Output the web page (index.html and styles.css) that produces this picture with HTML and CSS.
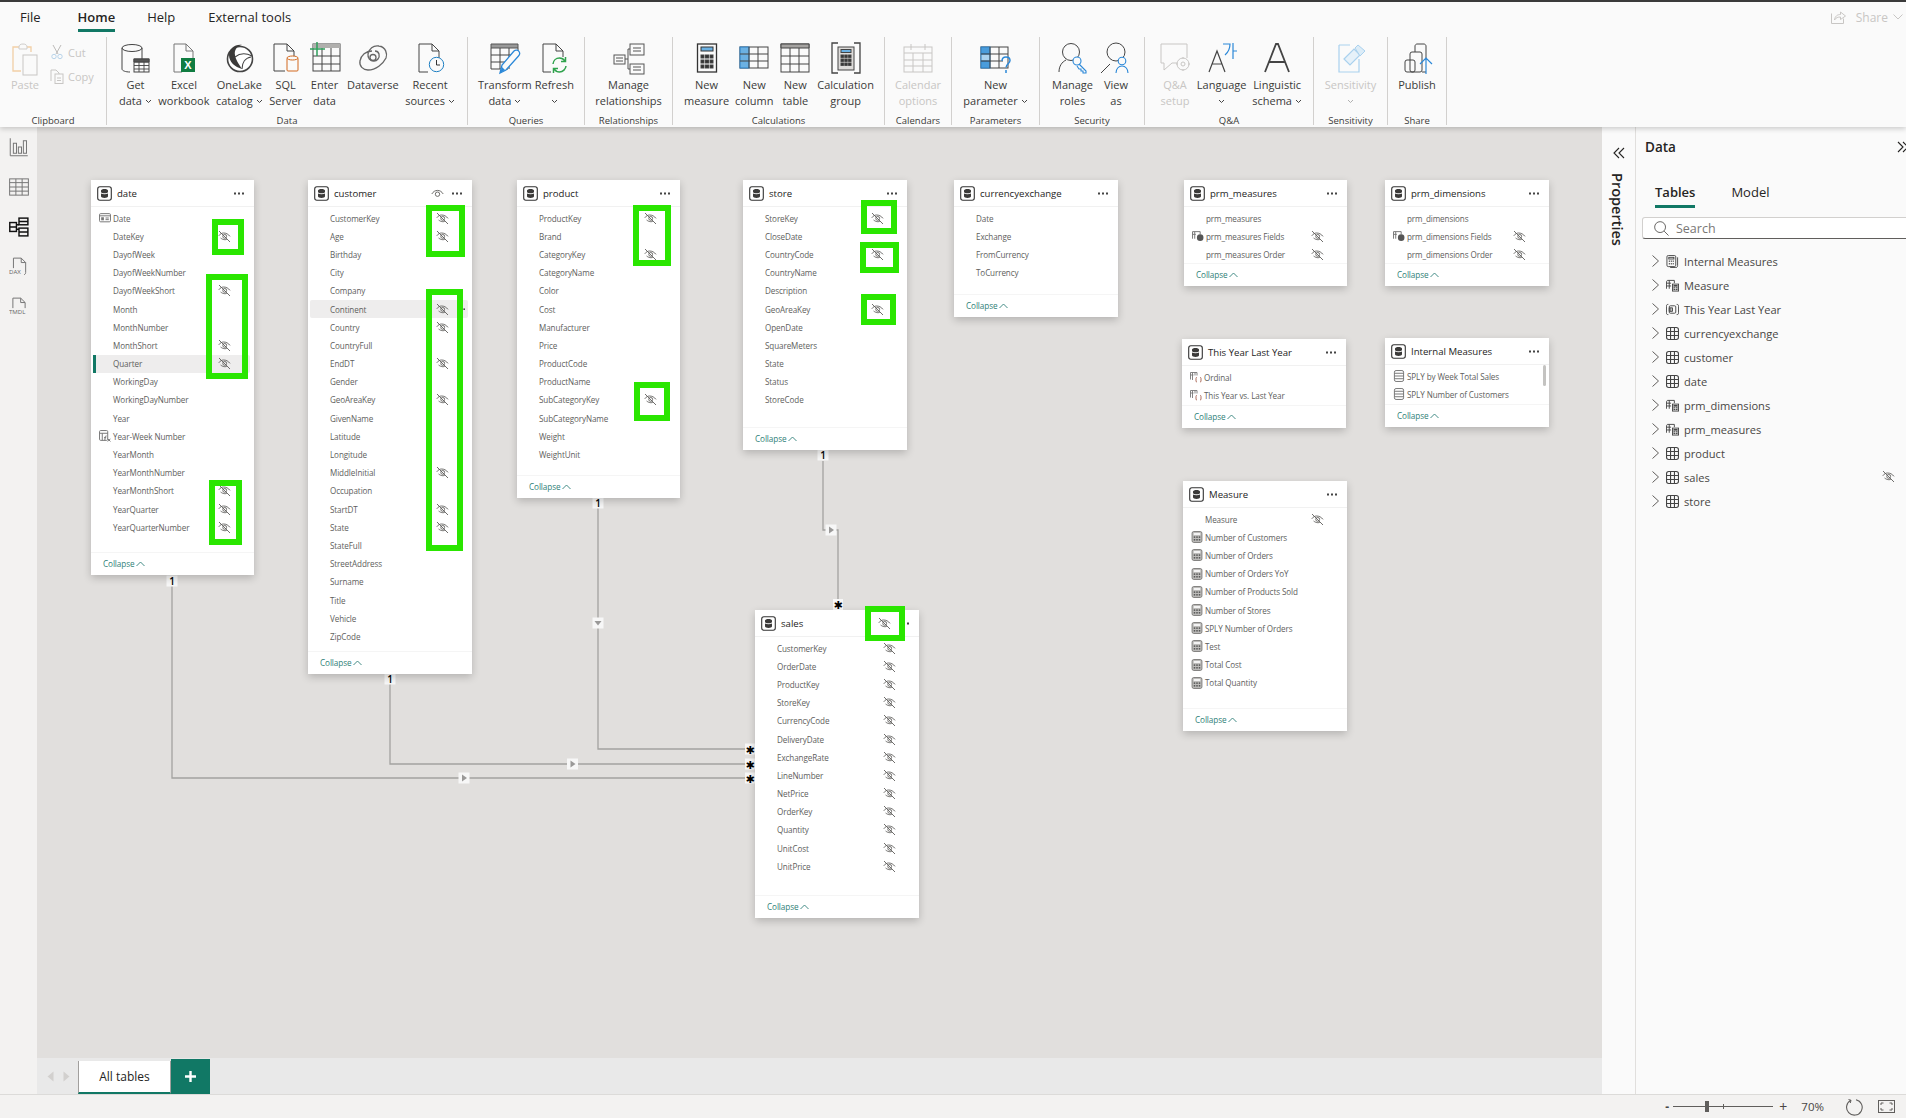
FILE: index.html
```html
<!DOCTYPE html>
<html lang="en">
<head>
<meta charset="utf-8">
<title>Model view</title>
<link rel="stylesheet" href="styles.css">
</head>
<body>
<svg class="sprite" aria-hidden="true">
  <symbol id="eye" viewBox="0 0 13 13"><g fill="none" stroke="#5f5d5b" stroke-width="0.9"><path d="M1 1l11 11"/><path d="M.8 5.8C2 3.9 3.9 3 5.6 3c2.7 0 4.8 1.3 6.4 3.4"/><path d="M2.6 8c1.4 1.1 2.8 1.7 4.2 1.7.7 0 1.4-.1 2-.4"/><circle cx="6.7" cy="6.4" r="1.9"/></g></symbol>
  <symbol id="eyeopen" viewBox="0 0 13 13"><g fill="none" stroke="#5f5d5b" stroke-width="0.9"><path d="M.8 7C2.2 4.6 4.2 3.4 6.5 3.4s4.3 1.2 5.7 3.6"/><circle cx="6.5" cy="7.2" r="2.2"/></g></symbol>
  <symbol id="tbl" viewBox="0 0 15 15"><rect x=".7" y=".7" width="13.6" height="13.6" rx="2.2" fill="#fff" stroke="#333" stroke-width="1.1"/><path d="M4 4.6c0-1 1.6-1.6 3.5-1.6s3.5.6 3.5 1.6v1.2c0 1-1.6 1.5-3.5 1.5S4 6.800 4 5.800zM4 7.400c1.800 1.100 5.200 1.100 7 0v2.900c0 1-1.600 1.700-3.500 1.700S4 11.300 4 10.300z" fill="#3b3a39"/></symbol>
  <symbol id="more" viewBox="0 0 10 3"><g fill="#444"><rect x="0" y="0.5" width="2" height="2"/><rect x="4" y="0.5" width="2" height="2"/><rect x="8" y="0.5" width="2" height="2"/></g></symbol>
  <symbol id="caret" viewBox="0 0 9 6"><path d="M.5 5L4.500 1l4 4" fill="none" stroke="#2f7f78" stroke-width=".9"/></symbol>
  <symbol id="chev" viewBox="0 0 7 5"><path d="M1 1l2.500 2.500L6 1" fill="none" stroke="#444" stroke-width="1"/></symbol>
  <symbol id="r-cal" viewBox="0 0 11 9"><g fill="none" stroke="#777" stroke-width=".9"><rect x=".5" y=".5" width="10" height="7.500" rx="1"/><path d="M.5 2.500h10M6 4.500h3M6 6h3"/></g><rect x="2" y="3.800" width="2.500" height="2.800" fill="#777"/></symbol>
  <symbol id="r-fx" viewBox="0 0 11 11"><g fill="none" stroke="#777" stroke-width=".9"><rect x=".5" y=".5" width="7.500" height="9" rx="1"/><path d="M.5 3h7.500M3 3v6.500"/><path d="M7 5.500c-1-.3-1.200.3-1.300 1.200L5.300 9.500M4.600 7h2"/><path d="M8 8l2.500 2.500M10.500 8L8 10.500"/></g></symbol>
  <symbol id="r-fp" viewBox="0 0 11 11"><g fill="none" stroke="#777" stroke-width=".9"><path d="M.5 8V1.500h7V4M2.500 1.500V8M.5 4h3"/></g><circle cx="7.500" cy="7" r="3" fill="#555"/></symbol>
  <symbol id="r-par" viewBox="0 0 12 11"><g fill="none" stroke="#777" stroke-width=".9"><path d="M.5 8V1h6.500v3M2.500 1v7.500M.5 3.500h3M5 1v3"/><path d="M7 6c-1 0-1 .4-1 1v2.500c0 .6.200 1 1 1M10 6c1 0 1 .4 1 1v2.500c0 .6-.2 1-1 1" stroke="#a6614f"/></g></symbol>
  <symbol id="r-list" viewBox="0 0 10 11"><g fill="none" stroke="#777" stroke-width=".9"><rect x=".8" y=".5" width="8.400" height="10" rx="1.500"/><path d="M.8 3h8.400M.8 5.500h8.400M.8 8h8.400"/></g></symbol>
  <symbol id="r-calc" viewBox="0 0 10 11"><rect x=".5" y=".5" width="9" height="10" rx="1.500" fill="#bdbcba" stroke="#807e7c" stroke-width=".9"/><rect x="2" y="2" width="6" height="1.500" fill="#fff"/><g fill="#444"><rect x="2" y="5" width="1.400" height="1.200"/><rect x="4.300" y="5" width="1.400" height="1.200"/><rect x="6.600" y="5" width="1.400" height="1.200"/><rect x="2" y="7.500" width="1.400" height="1.200"/><rect x="4.300" y="7.500" width="1.400" height="1.200"/><rect x="6.600" y="7.500" width="1.400" height="1.200"/></g></symbol>
  <symbol id="d-grid" viewBox="0 0 12 12"><g fill="none" stroke="#444" stroke-width="1"><rect x=".5" y=".5" width="11" height="11" rx="2"/><path d="M4.200.5v11M7.800.5v11M.5 4.200h11M.5 7.800h11"/></g></symbol>
  <symbol id="d-calc" viewBox="0 0 14 13"><g fill="none" stroke="#444" stroke-width="1"><path d="M.5 10V2.500l1-1.500h7.500v3M3.500 1v9M.5 4h5M.5 7h5"/></g><rect x="7" y="5" width="6.500" height="7.500" fill="#fff" stroke="#444"/><rect x="8" y="6" width="4.500" height="5.500" fill="#444"/><path d="M8 8h4.500M8 9.800h4.500M10.200 8v3.500" stroke="#fff" stroke-width=".6"/></symbol>
  <symbol id="d-imeas" viewBox="0 0 13 14"><g fill="none" stroke="#444" stroke-width="1"><rect x=".5" y=".5" width="9.500" height="12" rx="1.500"/><path d="M12 2.500v9c0 1.500-1 2-2 2H4"/><rect x="2.500" y="2.500" width="5.500" height="1.800"/></g><g fill="#444"><rect x="2.500" y="6" width="1.300" height="1.300"/><rect x="4.600" y="6" width="1.300" height="1.300"/><rect x="6.700" y="6" width="1.300" height="1.300"/><rect x="2.500" y="8.800" width="1.300" height="1.300"/><rect x="4.600" y="8.800" width="1.300" height="1.300"/><rect x="6.700" y="8.800" width="1.300" height="1.300"/></g></symbol>
  <symbol id="d-par" viewBox="0 0 14 12"><g fill="none" stroke="#444" stroke-width="1"><path d="M2.500.5C1 .5.500 1 .500 2.500v7c0 1.500.5 2 2 2M11.500.5c1.500 0 2 .5 2 2v7c0 1.500-.5 2-2 2"/><rect x="3.500" y="2" width="7" height="8" rx="1.200"/><path d="M3.500 4.200h3.500V8H3.500zM5.200 4.200V8"/></g></symbol>
</svg>

<div class="app">
  <header class="ribbon">
    <nav class="menu">
      <span class="menu-item m-file">File</span>
      <span class="menu-item m-home">Home</span>
      <span class="menu-item m-help">Help</span>
      <span class="menu-item m-ext">External tools</span>
      <span class="share">
        <svg class="share-ic" viewBox="0 0 15 14"><g fill="none" stroke="#c8c6c4"><path d="M.5 3.500v10h12v-5"/><path d="M3.500 10c.5-4 3-5.500 6-5.500V2l5 4-5 3.500V7c-2.500 0-4.500.5-6 3z"/></g></svg>
        <span>Share</span>
        <svg class="share-ch" viewBox="0 0 10 6"><path d="M.5.500l4.500 4.500 4.500-4.500" fill="none" stroke="#c8c6c4"/></svg>
      </span>
    </nav>
    <div class="groups">
      <section class="group g-clip">
        <div class="items clip-items">
          <div class="btn off">
            <svg class="ri" viewBox="0 0 32 32"><path d="M10 5H4v24h8" stroke="#f2cfa6" stroke-width="1.300"/><path d="M18 5h4v5" stroke="#f2cfa6" stroke-width="1.300"/><path d="M10 5c0-2 1.500-3 4-3s4 1 4 3v2h-8z" stroke="#cfcdcb"/><rect x="14" y="13" width="14" height="20" stroke="#c8c6c4" fill="#fafafa"/></svg>
            <span class="lbl">Paste</span>
          </div>
          <div class="mini">
            <div class="mini-row off">
              <svg class="mi" viewBox="0 0 14 16"><path d="M3 1l5 9M11 1L6 10" stroke="#bdbbb9"/><circle cx="4" cy="12.500" r="2.200" stroke="#b9d4ea"/><circle cx="10" cy="12.500" r="2.200" stroke="#b9d4ea"/></svg>
              <span>Cut</span>
            </div>
            <div class="mini-row off">
              <svg class="mi" viewBox="0 0 14 16"><path d="M1 13V2h5l3 3v3" stroke="#c8c6c4"/><rect x="5" y="6" width="8" height="9.500" fill="#fafafa" stroke="#c8c6c4"/><path d="M7 10h4M7 12.500h4" stroke="#c8c6c4"/></svg>
              <span>Copy</span>
            </div>
          </div>
        </div>
        <div class="glabel">Clipboard</div>
      </section>

      <section class="group g-data">
        <div class="items">
          <div class="btn">
            <svg class="ri" viewBox="0 0 32 32"><ellipse cx="13" cy="6" rx="10" ry="3.500"/><path d="M3 6v21c0 1.700 3.500 3 8 3M23 6v11"/><rect x="15" y="17" width="15" height="13" fill="#fafafa"/><path d="M15 20h15M15 23.500h15M15 27h15M20 20v10M25 20v10" stroke-width=".9"/><path d="M15 17h15v3H15z" fill="#555"/></svg>
            <span class="lbl">Get<br>data<svg class="ch"><use href="#chev"/></svg></span>
          </div>
          <div class="btn">
            <svg class="ri" viewBox="0 0 32 32"><path d="M6 30V2h12l7 7v8M18 2v7h7M6 30h8" stroke="#777"/><rect x="13" y="16" width="14" height="14" fill="#107c41" stroke="none"/><text x="20" y="27" class="xl">X</text></svg>
            <span class="lbl">Excel<br>workbook</span>
          </div>
          <div class="btn">
            <svg class="ri" viewBox="0 0 32 32"><circle cx="17" cy="17" r="12.500" stroke-width="1.600" fill="#fff"/><path d="M6 13C6 7 12 2 19 3c-5 1-8 5-7 10 .5 4 3 8 7 14C12 25 6 20 6 13z" fill="#3b3a39" stroke="none"/><path d="M12 15c5-4 11-4 17-1M19 27c0-6 3-11 9-12" stroke-width="1.100"/></svg>
            <span class="lbl">OneLake<br>catalog<svg class="ch"><use href="#chev"/></svg></span>
          </div>
          <div class="btn">
            <svg class="ri" viewBox="0 0 32 32"><path d="M4 29V2h13l7 7v7M17 2v7h7M4 29h11"/><rect x="17" y="16" width="11" height="13" rx="1" stroke="#d2691e" fill="#fafafa"/><ellipse cx="22.500" cy="16" rx="5.500" ry="2" stroke="#d2691e" fill="#fafafa"/></svg>
            <span class="lbl">SQL<br>Server</span>
          </div>
          <div class="btn">
            <svg class="ri ri-w" viewBox="0 0 32 32"><rect x="4" y="2" width="27" height="27" fill="#fafafa"/><path d="M4 2h27v4H4z" fill="#b0afad" stroke="none"/><path d="M4 14h27M4 22h27M13 6v23M22 6v23"/><path d="M1 7h15M8 0v14" stroke="#2e9e5b" stroke-width="1.500"/></svg>
            <span class="lbl">Enter<br>data</span>
          </div>
          <div class="btn">
            <svg class="ri" viewBox="0 0 32 32"><g stroke="#666" stroke-width="1.300"><path d="M15 9C9 9 4 13 3 19c-1 5 3 9 8 9 8 0 15-6 18-12 1.500-4 0-11-7-12-6-1-10 3-11 8-.5 4 2 7 6 7 3 0 6-3 5-7-.6-2-2-3-4-3"/><circle cx="16" cy="15.500" r="3"/></g></svg>
            <span class="lbl">Dataverse</span>
          </div>
          <div class="btn">
            <svg class="ri" viewBox="0 0 32 32"><path d="M5 30V2h13l7 7v8M18 2v7h7M5 30h9"/><circle cx="22.500" cy="22.500" r="7.200" stroke="#1e7fc2" fill="#fafafa"/><path d="M22.500 18v5h3.500" stroke="#333"/></svg>
            <span class="lbl">Recent<br>sources<svg class="ch"><use href="#chev"/></svg></span>
          </div>
        </div>
        <div class="glabel">Data</div>
      </section>

      <section class="group g-query">
        <div class="items">
          <div class="btn">
            <svg class="ri" viewBox="0 0 32 32"><path d="M2 2h27v4H2z" fill="#999" stroke="#555"/><path d="M2 6v21h17M29 6v8M2 13h27M2 20h18M11 6v21M20 6v21"/><path d="M11 31l2-8L25 9c1.500-1.500 4-1 5 .5s1 3-.5 4.500L17 28z" fill="#fafafa" stroke="#2b88d8" stroke-width="1.300"/><path d="M11 31l2-6 3 3z" fill="#2b88d8" stroke="none"/></svg>
            <span class="lbl">Transform<br>data<svg class="ch"><use href="#chev"/></svg></span>
          </div>
          <div class="btn">
            <svg class="ri" viewBox="0 0 32 32"><path d="M5 30V2h13l7 7v6M18 2v7h7M5 30h8"/><g fill="none" stroke="#2fa24c" stroke-width="1.500"><path d="M15 22c.3-3.500 3-6 6.500-6 2 0 4 1 5.500 3"/><path d="M28 24c-.3 3-3 6-6.500 6-2 0-4-1-5.500-3"/><path d="M27.500 15v4.500h-4.500M15.500 31v-4.500H20"/></g></svg>
            <span class="lbl">Refresh<br><svg class="ch ch-only"><use href="#chev"/></svg></span>
          </div>
        </div>
        <div class="glabel">Queries</div>
      </section>

      <section class="group g-rel">
        <div class="items">
          <div class="btn">
            <svg class="ri" viewBox="0 0 32 32"><rect x="1" y="13" width="11" height="9" stroke="#555"/><rect x="17" y="2" width="14" height="11" stroke="#555"/><rect x="17" y="22" width="14" height="10" stroke="#555"/><path d="M12 17h3M15 7v20M15 7h2M15 27h2M3 16h7M3 19h7M20 6h8M20 9h8M20 25h8M20 28h8" stroke="#555"/></svg>
            <span class="lbl">Manage<br>relationships</span>
          </div>
        </div>
        <div class="glabel">Relationships</div>
      </section>

      <section class="group g-calc">
        <div class="items">
          <div class="btn">
            <svg class="ri" viewBox="0 0 32 32"><rect x="6.500" y="2" width="19" height="28" stroke="#333" stroke-width="1.300"/><rect x="10" y="5" width="12" height="4" fill="#6bb1e3" stroke="#333"/><g fill="#333"><rect x="10" y="13" width="3" height="3"/><rect x="14.500" y="13" width="3" height="3"/><rect x="19" y="13" width="3" height="3"/><rect x="10" y="18" width="3" height="3"/><rect x="14.500" y="18" width="3" height="3"/><rect x="19" y="18" width="3" height="3"/><rect x="10" y="23" width="3" height="3"/><rect x="14.500" y="23" width="3" height="3"/><rect x="19" y="23" width="3" height="3"/></g></svg>
            <span class="lbl">New<br>measure</span>
          </div>
          <div class="btn">
            <svg class="ri" viewBox="0 0 32 32"><rect x="2" y="5" width="28" height="21" fill="#fafafa" stroke="#444"/><rect x="2" y="5" width="9" height="21" fill="#6bb1e3" stroke="#2b7ec2"/><path d="M2 12h28M2 19h28M11 5v21M20 5v21" stroke="#444"/></svg>
            <span class="lbl">New<br>column</span>
          </div>
          <div class="btn">
            <svg class="ri" viewBox="0 0 32 32"><rect x="2" y="2" width="28" height="28"/><path d="M2 2h28v4H2z" fill="#a5a3a1"/><path d="M2 14h28M2 22h28M11 6v24M20 6v24"/></svg>
            <span class="lbl">New<br>table</span>
          </div>
          <div class="btn">
            <svg class="ri" viewBox="0 0 32 32"><path d="M8 1H2v30h6M24 1h6v30h-6" stroke="#444" stroke-width="1.300"/><rect x="8" y="5" width="16" height="23" fill="#dedcda" stroke="#444"/><rect x="11" y="7.500" width="10" height="3" fill="#6bb1e3" stroke="#444"/><g fill="#333"><rect x="11" y="13" width="2.400" height="2.400"/><rect x="14.800" y="13" width="2.400" height="2.400"/><rect x="18.600" y="13" width="2.400" height="2.400"/><rect x="11" y="17" width="2.400" height="2.400"/><rect x="14.800" y="17" width="2.400" height="2.400"/><rect x="18.600" y="17" width="2.400" height="2.400"/><rect x="11" y="21" width="2.400" height="2.400"/><rect x="14.800" y="21" width="2.400" height="2.400"/><rect x="18.600" y="21" width="2.400" height="2.400"/></g></svg>
            <span class="lbl">Calculation<br>group</span>
          </div>
        </div>
        <div class="glabel">Calculations</div>
      </section>

      <section class="group g-cal">
        <div class="items">
          <div class="btn off">
            <svg class="ri ri-off" viewBox="0 0 32 32"><rect x="2" y="5" width="28" height="25"/><path d="M2 11h28M2 18h28M2 24h28M11 11v19M21 11v19M9 2v6M23 2v6"/></svg>
            <span class="lbl">Calendar<br>options</span>
          </div>
        </div>
        <div class="glabel">Calendars</div>
      </section>

      <section class="group g-par">
        <div class="items">
          <div class="btn">
            <svg class="ri" viewBox="0 0 32 32"><rect x="1" y="5" width="27" height="21" fill="#fafafa" stroke="#444"/><rect x="1" y="5" width="9" height="7" fill="#4a9cdb" stroke="#2b7ec2"/><rect x="1" y="19" width="9" height="7" fill="#4a9cdb" stroke="#2b7ec2"/><rect x="1" y="12" width="9" height="7" fill="#a9d1ee" stroke="#2b7ec2"/><path d="M1 12h27M1 19h22M10 5v21M19 5v21" stroke="#444"/><path d="M22 19c0-3 2-4 4-4s4 1 4 3.500c0 3-4 3.500-4 7M26 28v3" fill="none" stroke="#2b88d8" stroke-width="1.500"/></svg>
            <span class="lbl">New<br>parameter<svg class="ch"><use href="#chev"/></svg></span>
          </div>
        </div>
        <div class="glabel">Parameters</div>
      </section>

      <section class="group g-sec">
        <div class="items">
          <div class="btn">
            <svg class="ri" viewBox="0 0 32 32"><circle cx="14" cy="10" r="8.500"/><path d="M2 30c0-6 3-10 7-12"/><g stroke="#2b88d8" stroke-width="1.100"><circle cx="20" cy="19" r="4" fill="#fafafa"/><path d="M22 22l7 7v2h-3v-2h-2v-2h-2l-2-3"/></g></svg>
            <span class="lbl">Manage<br>roles</span>
          </div>
          <div class="btn">
            <svg class="ri" viewBox="0 0 32 32"><circle cx="16" cy="10" r="9"/><path d="M1 31l9-9"/><g stroke="#2b88d8" stroke-width="1.100"><circle cx="22" cy="19" r="3.800" fill="#fafafa"/><path d="M16 31c0-4 2.500-7 6-7s6 3 6 7"/></g></svg>
            <span class="lbl">View<br>as</span>
          </div>
        </div>
        <div class="glabel">Security</div>
      </section>

      <section class="group g-qa">
        <div class="items">
          <div class="btn off">
            <svg class="ri ri-off" viewBox="0 0 32 32"><path d="M2 2h26v14M2 2v19h3v7l8-7h5"/><circle cx="24" cy="22" r="6"/><circle cx="24" cy="22" r="2"/><path d="M24 15v2M24 27v2M17 22h2M29 22h2"/></svg>
            <span class="lbl">Q&amp;A<br>setup</span>
          </div>
          <div class="btn">
            <svg class="ri" viewBox="0 0 32 32"><path d="M3 30l8-21 8 21M6 22h10" stroke-width="1.200"/><path d="M17 2h7c0 4-1.500 8-5 11M27 1v16M27 9h4" stroke="#2b88d8" stroke-width="1.200"/></svg>
            <span class="lbl">Language<br><svg class="ch ch-only"><use href="#chev"/></svg></span>
          </div>
          <div class="btn">
            <svg class="ri" viewBox="0 0 32 32"><path d="M4 30L15 2h2l11 28M8.500 20h15" stroke-width="1.800"/></svg>
            <span class="lbl">Linguistic<br>schema<svg class="ch"><use href="#chev"/></svg></span>
          </div>
        </div>
        <div class="glabel">Q&amp;A</div>
      </section>

      <section class="group g-sens">
        <div class="items">
          <div class="btn off">
            <svg class="ri" viewBox="0 0 32 32"><path d="M4 3h11M4 3v27h20V17" stroke="#a9d1ee" stroke-width="1.200"/><path d="M9 17L19 7l6 6-10 10z" stroke="#a9d1ee" fill="#e6f1f9" stroke-width="1.200"/><path d="M20 6l3-3 7 6-5 5z" stroke="#a9d1ee" fill="#dcecf7"/></svg>
            <span class="lbl">Sensitivity<br><svg class="ch ch-only ch-off"><use href="#chev"/></svg></span>
          </div>
        </div>
        <div class="glabel">Sensitivity</div>
      </section>

      <section class="group g-share">
        <div class="items">
          <div class="btn">
            <svg class="ri" viewBox="0 0 32 32"><rect x="4" y="18" width="10" height="12" rx="2"/><rect x="9" y="10" width="12" height="20" rx="2" fill="none"/><path d="M14 10V4c0-1 1-2 2-2h7c1 0 2 1 2 2v12M21 30h4" /><path d="M25 17v15M19 22l6-6 6 6" stroke="#2b88d8" stroke-width="1.200"/></svg>
            <span class="lbl">Publish</span>
          </div>
        </div>
        <div class="glabel">Share</div>
      </section>
    </div>
  </header>

  <div class="workspace">
    <aside class="rail">
      <svg class="rail-ic" viewBox="0 0 16 16"><g fill="none" stroke="#777" stroke-width=".8"><path d="M1 1v14h14"/><rect x="3.500" y="5" width="2.500" height="8"/><rect x="7.500" y="8" width="2.500" height="5"/><rect x="11.500" y="3" width="2.500" height="10"/></g></svg>
      <svg class="rail-ic" viewBox="0 0 16 16"><g fill="none" stroke="#777" stroke-width=".8"><rect x=".5" y="1.500" width="15" height="13"/><path d="M.5 4.500h15M.5 8h15M.5 11.300h15M5.500 1.500v13M10.500 1.500v13"/></g></svg>
      <svg class="rail-ic" viewBox="0 0 18 18"><g fill="none" stroke="#111" stroke-width="1.300"><rect x=".7" y="5" width="6" height="8"/><rect x="9" y="1" width="8" height="6"/><rect x="9" y="10" width="8" height="7"/><path d="M.7 9h6M9 4h8M9 13.500h8M6.700 7H9M6.700 11H9"/></g></svg>
      <svg class="rail-ic" viewBox="0 0 18 18"><g fill="none" stroke="#777" stroke-width=".9"><path d="M4 10V1h7l4 4v9c0 1-.5 1.500-1.500 2M11 1v4h4"/></g><text x="0" y="15" class="rail-t">DAX</text></svg>
      <svg class="rail-ic" viewBox="0 0 18 18"><g fill="none" stroke="#777" stroke-width=".9"><path d="M3.500 10V1h7l4 4v5M10.500 1v4h4"/></g><text x="0" y="15.500" class="rail-t">TMDL</text></svg>
    </aside>

    <div class="center">
      <main class="canvas">
        <svg class="rels" viewBox="37 127 1566 931">
          <g class="lines">
            <path d="M172 586V778H746"/>
            <path d="M390 684V764H746"/>
            <path d="M598 508V749H746"/>
            <path d="M823 461V530H838V600"/>
          </g>
          <g class="badge"><rect x="166.500" y="575.500" width="11" height="11"/><text x="172" y="584.500">1</text></g>
          <g class="badge"><rect x="384.500" y="673.500" width="11" height="11"/><text x="390" y="682.500">1</text></g>
          <g class="badge"><rect x="592.500" y="497.500" width="11" height="11"/><text x="598" y="506.500">1</text></g>
          <g class="badge"><rect x="817.500" y="449.500" width="11" height="11"/><text x="823" y="458.500">1</text></g>
          <g class="badge"><rect x="458.500" y="772.500" width="11" height="11"/><path class="tri" d="M462 774.500l5 3.500-5 3.500z"/></g>
          <g class="badge"><rect x="567" y="758.500" width="11" height="11"/><path class="tri" d="M570.500 760.500l5 3.500-5 3.500z"/></g>
          <g class="badge"><rect x="592.500" y="617.500" width="11" height="11"/><path class="tri" d="M594.500 621l7 0-3.500 4.500z"/></g>
          <g class="badge"><rect x="825.500" y="524.500" width="11" height="11"/><path class="tri" d="M829 526.500l5 3.500-5 3.500z"/></g>
          <g class="badge star"><rect x="745" y="743.500" width="10" height="11"/><text x="750" y="753.500">✱</text></g>
          <g class="badge star"><rect x="745" y="758.500" width="10" height="11"/><text x="750" y="768.500">✱</text></g>
          <g class="badge star"><rect x="745" y="772.500" width="10" height="11"/><text x="750" y="782.500">✱</text></g>
          <g class="badge star"><rect x="833" y="599" width="10" height="11"/><text x="838" y="609">✱</text></g>
        </svg>

        <article class="card t-date">
          <div class="head"><svg class="hic"><use href="#tbl"/></svg><span class="title">date</span><svg class="dots"><use href="#more"/></svg></div>
          <div class="body">
            <div class="row"><svg class="ric"><use href="#r-cal"/></svg><span class="name">Date</span></div>
            <div class="row"><span class="name">DateKey</span><svg class="eye"><use href="#eye"/></svg></div>
            <div class="row"><span class="name">DayofWeek</span></div>
            <div class="row"><span class="name">DayofWeekNumber</span></div>
            <div class="row"><span class="name">DayofWeekShort</span><svg class="eye"><use href="#eye"/></svg></div>
            <div class="row"><span class="name">Month</span></div>
            <div class="row"><span class="name">MonthNumber</span></div>
            <div class="row"><span class="name">MonthShort</span><svg class="eye"><use href="#eye"/></svg></div>
            <div class="row hl sel"><span class="name">Quarter</span><svg class="eye"><use href="#eye"/></svg></div>
            <div class="row"><span class="name">WorkingDay</span></div>
            <div class="row"><span class="name">WorkingDayNumber</span></div>
            <div class="row"><span class="name">Year</span></div>
            <div class="row"><svg class="ric"><use href="#r-fx"/></svg><span class="name">Year-Week Number</span></div>
            <div class="row"><span class="name">YearMonth</span></div>
            <div class="row"><span class="name">YearMonthNumber</span></div>
            <div class="row"><span class="name">YearMonthShort</span><svg class="eye"><use href="#eye"/></svg></div>
            <div class="row"><span class="name">YearQuarter</span><svg class="eye"><use href="#eye"/></svg></div>
            <div class="row"><span class="name">YearQuarterNumber</span><svg class="eye"><use href="#eye"/></svg></div>
          </div>
          <div class="foot">Collapse<svg class="car"><use href="#caret"/></svg></div>
        </article>

        <article class="card t-customer">
          <div class="head"><svg class="hic"><use href="#tbl"/></svg><span class="title">customer</span><svg class="heye"><use href="#eyeopen"/></svg><svg class="dots"><use href="#more"/></svg></div>
          <div class="body">
            <div class="row"><span class="name">CustomerKey</span><svg class="eye"><use href="#eye"/></svg></div>
            <div class="row"><span class="name">Age</span><svg class="eye"><use href="#eye"/></svg></div>
            <div class="row"><span class="name">Birthday</span></div>
            <div class="row"><span class="name">City</span></div>
            <div class="row"><span class="name">Company</span></div>
            <div class="row hl"><span class="name">Continent</span><svg class="eye"><use href="#eye"/></svg><svg class="row-dots"><use href="#more"/></svg></div>
            <div class="row"><span class="name">Country</span><svg class="eye"><use href="#eye"/></svg></div>
            <div class="row"><span class="name">CountryFull</span></div>
            <div class="row"><span class="name">EndDT</span><svg class="eye"><use href="#eye"/></svg></div>
            <div class="row"><span class="name">Gender</span></div>
            <div class="row"><span class="name">GeoAreaKey</span><svg class="eye"><use href="#eye"/></svg></div>
            <div class="row"><span class="name">GivenName</span></div>
            <div class="row"><span class="name">Latitude</span></div>
            <div class="row"><span class="name">Longitude</span></div>
            <div class="row"><span class="name">MiddleInitial</span><svg class="eye"><use href="#eye"/></svg></div>
            <div class="row"><span class="name">Occupation</span></div>
            <div class="row"><span class="name">StartDT</span><svg class="eye"><use href="#eye"/></svg></div>
            <div class="row"><span class="name">State</span><svg class="eye"><use href="#eye"/></svg></div>
            <div class="row"><span class="name">StateFull</span></div>
            <div class="row"><span class="name">StreetAddress</span></div>
            <div class="row"><span class="name">Surname</span></div>
            <div class="row"><span class="name">Title</span></div>
            <div class="row"><span class="name">Vehicle</span></div>
            <div class="row"><span class="name">ZipCode</span></div>
          </div>
          <div class="foot">Collapse<svg class="car"><use href="#caret"/></svg></div>
        </article>

        <article class="card t-product">
          <div class="head"><svg class="hic"><use href="#tbl"/></svg><span class="title">product</span><svg class="dots"><use href="#more"/></svg></div>
          <div class="body">
            <div class="row"><span class="name">ProductKey</span><svg class="eye"><use href="#eye"/></svg></div>
            <div class="row"><span class="name">Brand</span></div>
            <div class="row"><span class="name">CategoryKey</span><svg class="eye"><use href="#eye"/></svg></div>
            <div class="row"><span class="name">CategoryName</span></div>
            <div class="row"><span class="name">Color</span></div>
            <div class="row"><span class="name">Cost</span></div>
            <div class="row"><span class="name">Manufacturer</span></div>
            <div class="row"><span class="name">Price</span></div>
            <div class="row"><span class="name">ProductCode</span></div>
            <div class="row"><span class="name">ProductName</span></div>
            <div class="row"><span class="name">SubCategoryKey</span><svg class="eye"><use href="#eye"/></svg></div>
            <div class="row"><span class="name">SubCategoryName</span></div>
            <div class="row"><span class="name">Weight</span></div>
            <div class="row"><span class="name">WeightUnit</span></div>
          </div>
          <div class="foot">Collapse<svg class="car"><use href="#caret"/></svg></div>
        </article>

        <article class="card t-store">
          <div class="head"><svg class="hic"><use href="#tbl"/></svg><span class="title">store</span><svg class="dots"><use href="#more"/></svg></div>
          <div class="body">
            <div class="row"><span class="name">StoreKey</span><svg class="eye"><use href="#eye"/></svg></div>
            <div class="row"><span class="name">CloseDate</span></div>
            <div class="row"><span class="name">CountryCode</span><svg class="eye"><use href="#eye"/></svg></div>
            <div class="row"><span class="name">CountryName</span></div>
            <div class="row"><span class="name">Description</span></div>
            <div class="row"><span class="name">GeoAreaKey</span><svg class="eye"><use href="#eye"/></svg></div>
            <div class="row"><span class="name">OpenDate</span></div>
            <div class="row"><span class="name">SquareMeters</span></div>
            <div class="row"><span class="name">State</span></div>
            <div class="row"><span class="name">Status</span></div>
            <div class="row"><span class="name">StoreCode</span></div>
          </div>
          <div class="foot">Collapse<svg class="car"><use href="#caret"/></svg></div>
        </article>

        <article class="card t-currency">
          <div class="head"><svg class="hic"><use href="#tbl"/></svg><span class="title">currencyexchange</span><svg class="dots"><use href="#more"/></svg></div>
          <div class="body">
            <div class="row"><span class="name">Date</span></div>
            <div class="row"><span class="name">Exchange</span></div>
            <div class="row"><span class="name">FromCurrency</span></div>
            <div class="row"><span class="name">ToCurrency</span></div>
          </div>
          <div class="foot">Collapse<svg class="car"><use href="#caret"/></svg></div>
        </article>

        <article class="card t-sales">
          <div class="head"><svg class="hic"><use href="#tbl"/></svg><span class="title">sales</span><svg class="heye"><use href="#eye"/></svg><svg class="dots"><use href="#more"/></svg></div>
          <div class="body">
            <div class="row"><span class="name">CustomerKey</span><svg class="eye"><use href="#eye"/></svg></div>
            <div class="row"><span class="name">OrderDate</span><svg class="eye"><use href="#eye"/></svg></div>
            <div class="row"><span class="name">ProductKey</span><svg class="eye"><use href="#eye"/></svg></div>
            <div class="row"><span class="name">StoreKey</span><svg class="eye"><use href="#eye"/></svg></div>
            <div class="row"><span class="name">CurrencyCode</span><svg class="eye"><use href="#eye"/></svg></div>
            <div class="row"><span class="name">DeliveryDate</span><svg class="eye"><use href="#eye"/></svg></div>
            <div class="row"><span class="name">ExchangeRate</span><svg class="eye"><use href="#eye"/></svg></div>
            <div class="row"><span class="name">LineNumber</span><svg class="eye"><use href="#eye"/></svg></div>
            <div class="row"><span class="name">NetPrice</span><svg class="eye"><use href="#eye"/></svg></div>
            <div class="row"><span class="name">OrderKey</span><svg class="eye"><use href="#eye"/></svg></div>
            <div class="row"><span class="name">Quantity</span><svg class="eye"><use href="#eye"/></svg></div>
            <div class="row"><span class="name">UnitCost</span><svg class="eye"><use href="#eye"/></svg></div>
            <div class="row"><span class="name">UnitPrice</span><svg class="eye"><use href="#eye"/></svg></div>
          </div>
          <div class="foot">Collapse<svg class="car"><use href="#caret"/></svg></div>
        </article>

        <article class="card t-pmeas">
          <div class="head"><svg class="hic"><use href="#tbl"/></svg><span class="title">prm_measures</span><svg class="dots"><use href="#more"/></svg></div>
          <div class="body">
            <div class="row"><span class="name">prm_measures</span></div>
            <div class="row"><svg class="ric"><use href="#r-fp"/></svg><span class="name">prm_measures Fields</span><svg class="eye"><use href="#eye"/></svg></div>
            <div class="row"><span class="name">prm_measures Order</span><svg class="eye"><use href="#eye"/></svg></div>
          </div>
          <div class="foot">Collapse<svg class="car"><use href="#caret"/></svg></div>
        </article>

        <article class="card t-pdim">
          <div class="head"><svg class="hic"><use href="#tbl"/></svg><span class="title">prm_dimensions</span><svg class="dots"><use href="#more"/></svg></div>
          <div class="body">
            <div class="row"><span class="name">prm_dimensions</span></div>
            <div class="row"><svg class="ric"><use href="#r-fp"/></svg><span class="name">prm_dimensions Fields</span><svg class="eye"><use href="#eye"/></svg></div>
            <div class="row"><span class="name">prm_dimensions Order</span><svg class="eye"><use href="#eye"/></svg></div>
          </div>
          <div class="foot">Collapse<svg class="car"><use href="#caret"/></svg></div>
        </article>

        <article class="card t-tyly">
          <div class="head"><svg class="hic"><use href="#tbl"/></svg><span class="title">This Year Last Year</span><svg class="dots"><use href="#more"/></svg></div>
          <div class="body">
            <div class="row"><svg class="ric"><use href="#r-par"/></svg><span class="name">Ordinal</span></div>
            <div class="row"><svg class="ric"><use href="#r-par"/></svg><span class="name">This Year vs. Last Year</span></div>
          </div>
          <div class="foot">Collapse<svg class="car"><use href="#caret"/></svg></div>
        </article>

        <article class="card t-imeas">
          <div class="head"><svg class="hic"><use href="#tbl"/></svg><span class="title">Internal Measures</span><svg class="dots"><use href="#more"/></svg></div>
          <div class="body">
            <div class="row"><svg class="ric"><use href="#r-list"/></svg><span class="name">SPLY by Week Total Sales</span></div>
            <div class="row"><svg class="ric"><use href="#r-list"/></svg><span class="name">SPLY Number of Customers</span></div>
            <span class="scroll"></span>
          </div>
          <div class="foot">Collapse<svg class="car"><use href="#caret"/></svg></div>
        </article>

        <article class="card t-measure">
          <div class="head"><svg class="hic"><use href="#tbl"/></svg><span class="title">Measure</span><svg class="dots"><use href="#more"/></svg></div>
          <div class="body">
            <div class="row"><span class="name">Measure</span><svg class="eye"><use href="#eye"/></svg></div>
            <div class="row"><svg class="ric"><use href="#r-calc"/></svg><span class="name">Number of Customers</span></div>
            <div class="row"><svg class="ric"><use href="#r-calc"/></svg><span class="name">Number of Orders</span></div>
            <div class="row"><svg class="ric"><use href="#r-calc"/></svg><span class="name">Number of Orders YoY</span></div>
            <div class="row"><svg class="ric"><use href="#r-calc"/></svg><span class="name">Number of Products Sold</span></div>
            <div class="row"><svg class="ric"><use href="#r-calc"/></svg><span class="name">Number of Stores</span></div>
            <div class="row"><svg class="ric"><use href="#r-calc"/></svg><span class="name">SPLY Number of Orders</span></div>
            <div class="row"><svg class="ric"><use href="#r-calc"/></svg><span class="name">Test</span></div>
            <div class="row"><svg class="ric"><use href="#r-calc"/></svg><span class="name">Total Cost</span></div>
            <div class="row"><svg class="ric"><use href="#r-calc"/></svg><span class="name">Total Quantity</span></div>
          </div>
          <div class="foot">Collapse<svg class="car"><use href="#caret"/></svg></div>
        </article>

        <i class="mark m1"></i><i class="mark m2"></i><i class="mark m3"></i><i class="mark m4"></i>
        <i class="mark m5"></i><i class="mark m6"></i><i class="mark m7"></i><i class="mark m8"></i>
        <i class="mark m9"></i><i class="mark m10"></i><i class="mark m11"></i>
      </main>

      <footer class="tabbar">
        <span class="tab-nav">
          <svg class="tn" viewBox="0 0 7 11"><path d="M6.500.500v10L.5 5.500z" fill="#d2d0ce"/></svg>
          <svg class="tn" viewBox="0 0 7 11"><path d="M.5.500v10l6-5z" fill="#d2d0ce"/></svg>
        </span>
        <span class="tab">All tables</span>
        <span class="tab-add"><svg class="plus" viewBox="0 0 11 11"><path d="M5.500 0v11M0 5.500h11" stroke="#fff" stroke-width="2.400"/></svg></span>
      </footer>
    </div>

    <aside class="props">
      <svg class="dbl" viewBox="0 0 12 12"><path d="M6 1L1 6l5 5M11 1L6 6l5 5" fill="none" stroke="#252423" stroke-width="1.100"/></svg>
      <span class="props-t">Properties</span>
    </aside>

    <aside class="data">
      <div class="dp-title"><span>Data</span><svg class="dbl-r" viewBox="0 0 12 12"><path d="M1 1l5 5-5 5M6 1l5 5-5 5" fill="none" stroke="#252423" stroke-width="1.100"/></svg></div>
      <div class="dp-tabs"><span class="dp-tab on">Tables</span><span class="dp-tab">Model</span></div>
      <div class="search">
        <svg class="s-ic" viewBox="0 0 16 16"><circle cx="6.500" cy="6.500" r="5.800" fill="none" stroke="#605e5c" stroke-width="1"/><path d="M10.800 10.800L15.500 15.500" stroke="#605e5c" stroke-width="1"/></svg>
        <span>Search</span>
      </div>
      <ul class="tree">
        <li><svg class="tr-ch" viewBox="0 0 7 12"><path d="M.5.500L6.500 6l-6 5.500" fill="none" stroke="#605e5c"/></svg><svg class="tr-ic"><use href="#d-imeas"/></svg><span>Internal Measures</span></li>
        <li><svg class="tr-ch" viewBox="0 0 7 12"><path d="M.5.500L6.500 6l-6 5.500" fill="none" stroke="#605e5c"/></svg><svg class="tr-ic"><use href="#d-calc"/></svg><span>Measure</span></li>
        <li><svg class="tr-ch" viewBox="0 0 7 12"><path d="M.5.500L6.500 6l-6 5.500" fill="none" stroke="#605e5c"/></svg><svg class="tr-ic"><use href="#d-par"/></svg><span>This Year Last Year</span></li>
        <li><svg class="tr-ch" viewBox="0 0 7 12"><path d="M.5.500L6.500 6l-6 5.500" fill="none" stroke="#605e5c"/></svg><svg class="tr-ic"><use href="#d-grid"/></svg><span>currencyexchange</span></li>
        <li><svg class="tr-ch" viewBox="0 0 7 12"><path d="M.5.500L6.500 6l-6 5.500" fill="none" stroke="#605e5c"/></svg><svg class="tr-ic"><use href="#d-grid"/></svg><span>customer</span></li>
        <li><svg class="tr-ch" viewBox="0 0 7 12"><path d="M.5.500L6.500 6l-6 5.500" fill="none" stroke="#605e5c"/></svg><svg class="tr-ic"><use href="#d-grid"/></svg><span>date</span></li>
        <li><svg class="tr-ch" viewBox="0 0 7 12"><path d="M.5.500L6.500 6l-6 5.500" fill="none" stroke="#605e5c"/></svg><svg class="tr-ic"><use href="#d-calc"/></svg><span>prm_dimensions</span></li>
        <li><svg class="tr-ch" viewBox="0 0 7 12"><path d="M.5.500L6.500 6l-6 5.500" fill="none" stroke="#605e5c"/></svg><svg class="tr-ic"><use href="#d-calc"/></svg><span>prm_measures</span></li>
        <li><svg class="tr-ch" viewBox="0 0 7 12"><path d="M.5.500L6.500 6l-6 5.500" fill="none" stroke="#605e5c"/></svg><svg class="tr-ic"><use href="#d-grid"/></svg><span>product</span></li>
        <li><svg class="tr-ch" viewBox="0 0 7 12"><path d="M.5.500L6.500 6l-6 5.500" fill="none" stroke="#605e5c"/></svg><svg class="tr-ic"><use href="#d-grid"/></svg><span>sales</span><svg class="tr-eye"><use href="#eye"/></svg></li>
        <li><svg class="tr-ch" viewBox="0 0 7 12"><path d="M.5.500L6.500 6l-6 5.500" fill="none" stroke="#605e5c"/></svg><svg class="tr-ic"><use href="#d-grid"/></svg><span>store</span></li>
      </ul>
    </aside>
  </div>

  <footer class="status">
    <span class="z-minus">-</span>
    <span class="z-slider"><i class="z-thumb"></i><i class="z-tick"></i></span>
    <span class="z-plus">+</span>
    <span class="z-val">70%</span>
    <svg class="z-reset" viewBox="0 0 18 18"><path d="M6 2.300A7.800 7.800 0 1 0 11 1.700" fill="none" stroke="#605e5c" stroke-width="1.100"/><path d="M3.500 1.500L6 2.300 5.300 5" fill="none" stroke="#605e5c"/></svg>
    <svg class="z-fit" viewBox="0 0 17 13"><rect x=".5" y=".5" width="16" height="12" fill="none" stroke="#605e5c"/><path d="M3 5V3h2.500M11.500 3H14v2M14 8v2h-2.500M5.500 10H3V8" fill="none" stroke="#605e5c"/></svg>
  </footer>
</div>
</body>
</html>
```

FILE: styles.css
```css
* { box-sizing: border-box; }
html, body { margin: 0; height: 100%; overflow: hidden; }
body { font-family: "Open Sans", "Liberation Sans", sans-serif; color: #252423; background: #f3f2f1; }
.sprite { position: absolute; width: 0; height: 0; }
.app { display: flex; flex-direction: column; width: 1906px; height: 1118px; }

/* ribbon */
.ribbon { height: 127px; flex: none; background: #fafafa; border-top: 2px solid #3a3a3a; box-shadow: 0 2px 5px rgba(0,0,0,.18); position: relative; z-index: 3; }
.menu { height: 35px; display: flex; align-items: flex-start; position: relative; font-size: 13px; }
.menu-item { line-height: 30px; height: 30px; }
.m-file { margin-left: 20px; }
.m-home { margin-left: 37px; font-weight: 600; border-bottom: 3px solid #117865; }
.m-help { margin-left: 32px; }
.m-ext { margin-left: 33px; }
.share { margin-left: auto; display: flex; align-items: center; gap: 10px; height: 30px; padding-right: 3px; color: #c8c6c4; font-size: 12px; }
.share-ic { width: 15px; height: 14px; }
.share-ch { width: 10px; height: 6px; margin-left: -5px; }
.groups { display: flex; height: 88px; }
.group { display: flex; flex-direction: column; border-right: 1px solid #d2d0ce; flex: none; }
.items { flex: 1; display: flex; justify-content: space-between; padding: 5px 4px 0; min-height: 0; }
.glabel { height: 11px; padding-top: 0; line-height: 14px; text-align: center; font-size: 9.500px; color: #3b3a39; white-space: nowrap; }
.g-clip { width: 107px; }
.g-data { width: 361px; }
.g-data .items { padding: 5px 12px 0 12px; }
.g-query { width: 117px; }
.g-query .items { padding: 5px 10px 0 10px; }
.g-rel { width: 88px; }
.g-rel .items { justify-content: center; }
.g-calc { width: 212px; }
.g-calc .items { padding: 5px 10px 0 11px; }
.g-cal { width: 67px; }
.g-cal .items, .g-par .items, .g-sens .items, .g-share .items { justify-content: center; }
.g-par { width: 88px; }
.g-sec { width: 105px; }
.g-sec .items { padding: 5px 12px 0 12px; }
.g-qa { width: 169px; }
.g-qa .items { padding: 5px 11px 0 14px; }
.g-sens { width: 74px; }
.g-share { width: 59px; }
.btn { display: flex; flex-direction: column; align-items: center; }
.ri { width: 32px; height: 32px; flex: none; fill: none; stroke: #444; stroke-width: 1; overflow: visible; }
.ri-off { stroke: #c8c6c4; }
.xl { font-family: "Liberation Sans", sans-serif; font-size: 11px; font-weight: 700; fill: #fff; stroke: none; text-anchor: middle; }
.lbl { text-align: center; font-size: 11px; line-height: 16px; margin-top: 3px; color: #3b3a39; white-space: nowrap; }
.off, .off .lbl { color: #c8c6c4; }
.ch { width: 7px; height: 5px; margin-left: 3px; vertical-align: 1px; }
.ch-only { margin-left: 0; }
.ch-off { opacity: .4; }
.clip-items { padding: 5px 10px 0 9px; justify-content: flex-start; gap: 9px; }
.clip-items .btn { width: 32px; }
.mini { display: flex; flex-direction: column; gap: 8px; margin-top: 2px; }
.mini-row { display: flex; align-items: center; gap: 4px; font-size: 11px; height: 16px; }
.mi { width: 14px; height: 16px; fill: none; }

/* workspace */
.workspace { flex: 1; display: flex; min-height: 0; }
.rail { width: 37px; flex: none; background: #f3f2f1; display: flex; flex-direction: column; align-items: center; padding-top: 10px; gap: 20px; }
.rail-ic { width: 20px; height: 20px; flex: none; }
.rail-t { font-size: 5.500px; fill: #666; }
.center { flex: 1; display: flex; flex-direction: column; min-width: 0; }
.canvas { flex: 1; position: relative; background: #e1dfdd; overflow: hidden; }
.rels { position: absolute; left: 0; top: 0; width: 1566px; height: 931px; }
.lines path { fill: none; stroke: #a3a2a0; stroke-width: 1.300; }
.badge rect { fill: #f7f7f7; }
.badge text { font-size: 10px; text-anchor: middle; fill: #000; font-family: "Open Sans", sans-serif; font-weight: 600; }
.star text { font-family: "DejaVu Sans", sans-serif; font-size: 11px; font-weight: 400; }
.tri { fill: #9a9998; }

/* table cards */
.card { position: absolute; width: 164px; background: #fff; display: flex; flex-direction: column; box-shadow: 0 3px 8px rgba(0,0,0,.2); }
.t-date { left: 54px; top: 53px; width: 163px; height: 395px; }
.t-customer { left: 271px; top: 53px; height: 494px; }
.t-product { left: 480px; top: 53px; width: 163px; height: 318px; }
.t-store { left: 706px; top: 53px; height: 270px; }
.t-currency { left: 917px; top: 53px; height: 137px; }
.t-sales { left: 718px; top: 483px; height: 308px; }
.t-pmeas { left: 1147px; top: 53px; width: 163px; height: 106px; }
.t-pdim { left: 1348px; top: 53px; height: 106px; }
.t-tyly { left: 1145px; top: 212px; height: 89px; }
.t-imeas { left: 1348px; top: 211px; height: 89px; }
.t-measure { left: 1146px; top: 354px; height: 250px; }
.head { height: 27px; flex: none; display: flex; align-items: center; padding: 0 10px 0 6px; border-bottom: 1px solid #f1f1f1; }
.hic { width: 15px; height: 15px; flex: none; margin-right: 5px; }
.title { flex: 1; font-size: 9.600px; color: #252423; white-space: nowrap; font-weight: 500; }
.dots { width: 10px; height: 3px; flex: none; }
.heye { width: 13px; height: 13px; flex: none; margin-right: 8px; }
.body { flex: 1; padding-top: 2px; position: relative; min-height: 0; }
.row { height: 18.200px; display: flex; align-items: center; padding-left: 22px; position: relative; font-size: 8.100px; letter-spacing: -.1px; color: #605e5c; white-space: nowrap; }
.ric { position: absolute; left: 8px; top: 3px; width: 12px; height: 12px; }
.name { flex: 1; }
.eye { width: 13px; height: 13px; flex: none; margin-right: 23px; }
.hl { margin: 0 4px 0 2px; padding-left: 20px; background: #eeeded; border-radius: 2px; }
.hl .eye { margin-right: 19px; }
.sel::before { content: ""; position: absolute; left: 0; top: 0; bottom: 0; width: 2.500px; background: #117865; }
.row-dots { position: absolute; right: 3px; top: 8px; width: 8px; height: 2.400px; }
.scroll { position: absolute; right: 3px; top: 0; width: 3px; height: 21px; background: #c4c3c1; border-radius: 2px; }
.foot { height: 23px; flex: none; border-top: 1px solid #f5f5f5; padding-left: 12px; font-size: 8.200px; letter-spacing: -.1px; line-height: 22px; color: #2f7f78; display: flex; align-items: center; }
.car { width: 9px; height: 6px; margin-left: 2px; }

/* highlight marks */
.mark { position: absolute; border: 6px solid #2ae600; }
.m1 { left: 175px; top: 92px; width: 32px; height: 36px; }
.m2 { left: 169px; top: 147px; width: 42px; height: 105px; }
.m3 { left: 172px; top: 353px; width: 33px; height: 65px; }
.m4 { left: 389px; top: 78px; width: 39px; height: 52px; }
.m5 { left: 389px; top: 162px; width: 37px; height: 262px; }
.m6 { left: 596px; top: 78px; width: 38px; height: 61px; }
.m7 { left: 597px; top: 255px; width: 36px; height: 39px; }
.m8 { left: 824px; top: 73px; width: 36px; height: 34px; }
.m9 { left: 823px; top: 115px; width: 39px; height: 31px; }
.m10 { left: 824px; top: 167px; width: 35px; height: 31px; }
.m11 { left: 828px; top: 479px; width: 40px; height: 35px; }

/* page tabs */
.tabbar { height: 36px; flex: none; background: #e9e9e9; display: flex; align-items: flex-end; }
.tab-nav { width: 41px; height: 36px; display: flex; align-items: center; justify-content: space-around; padding: 0 3px 0 5px; }
.tn { width: 7px; height: 11px; }
.tab { width: 93px; height: 33px; background: #fff; border-left: 1px solid #a19f9d; border-right: 1px solid #a19f9d; border-bottom: 2px solid #117865; font-size: 12px; line-height: 31px; text-align: center; font-weight: 500; }
.tab-add { width: 39px; height: 35px; background: #117865; display: flex; align-items: center; justify-content: center; }
.plus { width: 11px; height: 11px; }

/* side panes */
.props { width: 34px; flex: none; background: #fafafa; border-right: 1px solid #e1dfdd; display: flex; flex-direction: column; align-items: center; padding: 20px 3px 0 0; }
.dbl { width: 12px; height: 12px; margin-left: 3px; }
.props-t { writing-mode: vertical-rl; font-size: 14.500px; font-weight: 600; margin-top: 14px; line-height: 16px; color: #252423; }
.data { width: 270px; flex: none; background: #fafafa; overflow: hidden; }
.dp-title { height: 40px; display: flex; align-items: center; justify-content: space-between; padding-left: 9px; font-size: 13.500px; font-weight: 600; margin-right: -3px; }
.dbl-r { width: 12px; height: 12px; }
.dp-tabs { height: 41px; display: flex; padding-left: 19px; gap: 36px; font-size: 13px; }
.dp-tab { padding-top: 15px; line-height: 20px; height: 41px; }
.dp-tab.on { font-weight: 600; border-bottom: 3px solid #117865; }
.search { margin: 9px 0 0 6px; width: 300px; height: 22px; background: #fff; border: 1px solid #d2d0ce; border-bottom-color: #605e5c; border-radius: 3px; display: flex; align-items: center; padding-left: 11px; gap: 7px; font-size: 12.500px; color: #797775; }
.s-ic { width: 15px; height: 15px; }
.tree { list-style: none; margin: 10px 0 0; padding: 0; }
.tree li { height: 24px; display: flex; align-items: center; padding-left: 16px; font-size: 11.100px; color: #484644; position: relative; }
.tr-ch { width: 7px; height: 12px; flex: none; margin-right: 7px; }
.tr-ic { width: 13px; height: 13px; flex: none; margin-right: 5px; }
.tr-eye { position: absolute; right: 11px; top: 5px; width: 13px; height: 13px; }

/* status */
.status { height: 24px; flex: none; background: #f3f2f1; border-top: 1px solid #dcdbd9; display: flex; align-items: center; justify-content: flex-end; padding-right: 11px; color: #484644; font-size: 12px; }
.z-minus { width: 7px; font-weight: 700; }
.z-slider { width: 100px; height: 1px; background: #605e5c; position: relative; margin-left: 1px; }
.z-thumb { position: absolute; left: 32px; top: -5px; width: 4px; height: 11px; background: #605e5c; }
.z-tick { position: absolute; left: 50px; top: -2px; width: 1px; height: 5px; background: #605e5c; }
.z-plus { margin-left: 6px; width: 8px; font-size: 14px; }
.z-val { margin-left: 14px; font-size: 11.500px; }
.z-reset { width: 18px; height: 18px; margin-left: 21px; }
.z-fit { width: 17px; height: 13px; margin-left: 15px; }
```
